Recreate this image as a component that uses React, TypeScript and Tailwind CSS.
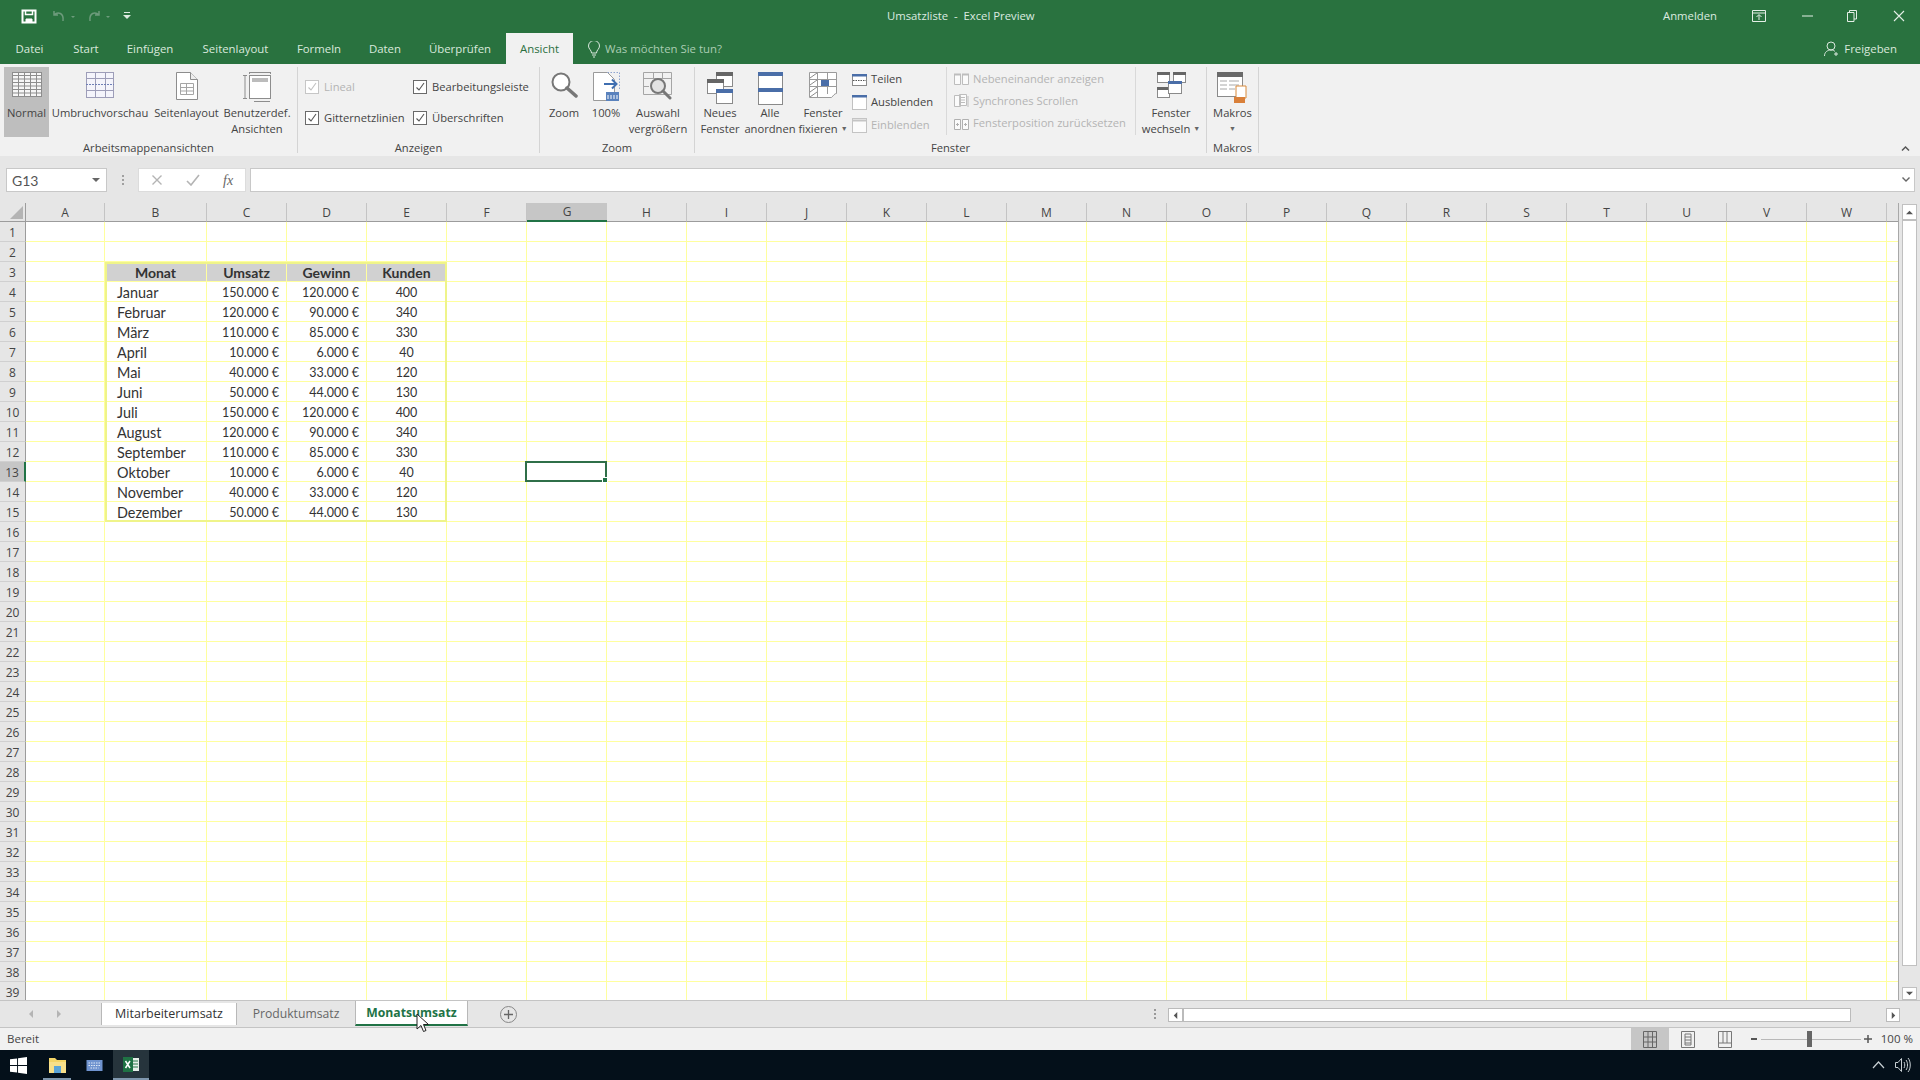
import React from 'react';

const COLUMNS = 'ABCDEFGHIJKLMNOPQRSTUVW'.split('');

const TABLE = [
  ['Januar', '150.000 €', '120.000 €', '400'],
  ['Februar', '120.000 €', '90.000 €', '340'],
  ['März', '110.000 €', '85.000 €', '330'],
  ['April', '10.000 €', '6.000 €', '40'],
  ['Mai', '40.000 €', '33.000 €', '120'],
  ['Juni', '50.000 €', '44.000 €', '130'],
  ['Juli', '150.000 €', '120.000 €', '400'],
  ['August', '120.000 €', '90.000 €', '340'],
  ['September', '110.000 €', '85.000 €', '330'],
  ['Oktober', '10.000 €', '6.000 €', '40'],
  ['November', '40.000 €', '33.000 €', '120'],
  ['Dezember', '50.000 €', '44.000 €', '130'],
];

const TABS: [string, string][] = [
  ['Datei', 'w-[59px]'],
  ['Start', 'w-[54px]'],
  ['Einfügen', 'w-[74px]'],
  ['Seitenlayout', 'w-[97px]'],
  ['Formeln', 'w-[70px]'],
  ['Daten', 'w-[62px]'],
  ['Überprüfen', 'w-[88px]'],
];

/* ---------- small drawings ---------- */

const SaveIcon = () => (
  <svg width="16" height="15" viewBox="0 0 16 15" fill="none" stroke="#fff" strokeWidth="2">
    <path d="M1.5 1.5h13v12h-13z" />
    <path d="M4.5 1.5v4h7v-4" strokeWidth="1.5" />
    <path d="M5 14v-4h6v4" fill="#fff" strokeWidth="1" />
  </svg>
);

const NormalIcon = () => (
  <svg width="30" height="25" viewBox="0 0 30 25" fill="#f6f6f6" stroke="#8d8d8d">
    <rect x="0.5" y="0.5" width="29" height="24" />
    <path
      d="M0 3.500h30M0 7h30M0 10.500h30M0 14h30M0 17.500h30M0 21h30M6.500 0v25M12.500 0v25M18.500 0v25M24.500 0v25"
      fill="none"
    />
  </svg>
);

const BreakIcon = () => (
  <svg width="28" height="26" viewBox="0 0 28 26" fill="#f4f4fb" stroke="#9d9db8">
    <rect x="0.5" y="0.5" width="27" height="25" />
    <path d="M0 6.5h28M0 18.5h28M9.5 0v26M19.5 0v26" fill="none" />
    <path d="M0 12.5h28" fill="none" stroke="#6f7fb5" strokeDasharray="2 1" />
  </svg>
);

const PageIcon = () => (
  <svg width="22" height="28" viewBox="0 0 22 28" fill="#fff" stroke="#8d8d8d">
    <path d="M0.5 0.5h14l7 7v20h-21z" />
    <path d="M14.5 0.5v7h7" fill="#eee" />
    <path d="M4.5 11.5h13v11h-13zM4.5 15.5h13M4.5 19h13M10.5 11.5v11" fill="none" stroke="#a5a5a5" />
  </svg>
);

const CustomIcon = () => (
  <svg width="28" height="30" viewBox="0 0 28 30" fill="none" stroke="#8d8d8d">
    <rect x="6.5" y="3.5" width="21" height="23" fill="#fff" />
    <rect x="9" y="6" width="16" height="4" fill="#bcbcbc" stroke="none" />
    <path d="M2 3.5v23M0 3.5h4M0 26.5h4M6.5 0.5h21M6.5 0v2M27.5 0v2M11 29.5h16" />
  </svg>
);

const LensIcon = () => (
  <svg width="28" height="26" viewBox="0 0 28 26" fill="none">
    <circle cx="11" cy="10" r="8.5" stroke="#777" strokeWidth="2" fill="#fff" />
    <path d="M17 16l9 8" stroke="#777" strokeWidth="3.5" strokeLinecap="round" />
  </svg>
);

const HundredIcon = () => (
  <svg width="27" height="30" viewBox="0 0 27 30" fill="none">
    <path d="M0.5 0.5h14l7 7v21h-21z" fill="#fff" stroke="#9a9a9a" />
    <path d="M14.5 0.5h12v18" stroke="#8ea4cf" strokeDasharray="1.5 1.5" />
    <path d="M11 12h12M19 7.5l4.5 4.5-4.5 4.5" stroke="#3f6eb0" strokeWidth="2" />
    <rect x="13" y="20" width="13" height="9" fill="#5a82bd" />
    <path d="M15 23v4M18 23v4M21 23v4M24 23v4" stroke="#fff" />
  </svg>
);

const SelectionZoomIcon = () => (
  <svg width="30" height="28" viewBox="0 0 30 28" fill="none">
    <path d="M0.5 0.5h28v22h-28zM0.5 6.5h28M10.5 0v6M19.5 0v6M0 14.5h6" stroke="#a5a5a5" />
    <circle cx="15" cy="14" r="7" stroke="#777" strokeWidth="2" fill="#e2e2e2" />
    <path d="M20 19l7 7" stroke="#777" strokeWidth="3" strokeLinecap="round" />
  </svg>
);

const NewWindowIcon = () => (
  <svg width="27" height="32" viewBox="0 0 27 32" fill="#fff" stroke="#8a8a8a">
    <rect x="9.5" y="0.5" width="16" height="14" />
    <rect x="9" y="0" width="17" height="4" fill="#666" stroke="none" />
    <rect x="0.5" y="7.5" width="16" height="14" />
    <rect x="0" y="7" width="17" height="4" fill="#666" stroke="none" />
    <rect x="9.5" y="17.5" width="16" height="14" />
    <rect x="9" y="17" width="17" height="4" fill="#4a6ea8" stroke="none" />
  </svg>
);

const ArrangeIcon = () => (
  <svg width="25" height="33" viewBox="0 0 25 33" fill="#fff" stroke="#8a8a8a">
    <rect x="0.5" y="0.5" width="24" height="32" />
    <rect x="0" y="0" width="25" height="4" fill="#4a6ea8" stroke="none" />
    <rect x="0" y="16" width="25" height="4" fill="#4a6ea8" stroke="none" />
  </svg>
);

const FreezeIcon = () => (
  <svg width="28" height="27" viewBox="0 0 28 27" fill="#fff" stroke="#9a9a9a">
    <path d="M0.5 0.5h27v21c-2 0-3 2-5 4h-22z" />
    <path d="M0 7.5h28M0 14.5h28M8.5 0v26M18.5 0v22" fill="none" />
    <path d="M1 6l7-5M1 13l7-5M1 20l7-5M1 25l7-5" fill="none" stroke="#8a8a8a" />
    <rect x="12" y="8" width="8" height="6" fill="#4a6ea8" stroke="none" />
  </svg>
);

const SwitchIcon = () => (
  <svg width="29" height="26" viewBox="0 0 29 26" fill="#fff" stroke="#8a8a8a">
    <rect x="0.5" y="0.5" width="12" height="10" />
    <rect x="0" y="0" width="13" height="3" fill="#666" stroke="none" />
    <rect x="16.5" y="0.5" width="12" height="10" />
    <rect x="16" y="0" width="13" height="3" fill="#666" stroke="none" />
    <rect x="0.5" y="15.5" width="12" height="10" />
    <rect x="0" y="15" width="13" height="3" fill="#666" stroke="none" />
    <rect x="11.5" y="9.5" width="13" height="12" />
    <rect x="11" y="9" width="14" height="3" fill="#4a6ea8" stroke="none" />
  </svg>
);

const MacroIcon = () => (
  <svg width="32" height="32" viewBox="0 0 32 32" fill="none">
    <rect x="0.5" y="0.5" width="25" height="24" fill="#fff" stroke="#8a8a8a" />
    <rect x="0" y="0" width="26" height="5" fill="#6a6a6a" />
    <path d="M3 9h7M12 9h10M3 13h7M12 13h10M3 17h7M12 17h6" stroke="#a8a8a8" />
    <path d="M19 14h10v12h-10z" fill="#fff" stroke="#d98a3a" />
    <rect x="17" y="25" width="11" height="6" fill="#d9803a" />
  </svg>
);

const SplitIcon = () => (
  <svg width="15" height="12" viewBox="0 0 15 12" fill="#fff" stroke="#8a8a8a">
    <rect x="0.5" y="0.5" width="14" height="11" />
    <rect x="0" y="0" width="15" height="2.5" fill="#4a6ea8" stroke="none" />
    <path d="M1 6.5h13" strokeDasharray="1.5 1" stroke="#555" fill="none" />
  </svg>
);

const HideIcon = () => (
  <svg width="15" height="15" viewBox="0 0 15 15" fill="#fff" stroke="#8a8a8a" strokeDasharray="1 1">
    <rect x="0.5" y="0.5" width="14" height="14" />
    <rect x="0" y="0" width="15" height="2.5" fill="#4a6ea8" stroke="none" />
  </svg>
);

const UnhideIcon = () => (
  <svg width="15" height="15" viewBox="0 0 15 15" fill="#fbfbfb" stroke="#c4c4c4">
    <rect x="0.5" y="0.5" width="14" height="14" />
    <path d="M0 2.5h15" fill="none" strokeWidth="2" />
  </svg>
);

const SideBySideIcon = () => (
  <svg width="15" height="12" viewBox="0 0 15 12" fill="#fbfbfb" stroke="#bdbdbd">
    <path d="M0.5 1.5h6v10h-6zM8.5 1.5h6v10h-6z" />
    <path d="M0 1.5h7M8 1.5h7" strokeWidth="2" fill="none" />
  </svg>
);

const SyncIcon = () => (
  <svg width="15" height="14" viewBox="0 0 15 14" fill="#fbfbfb" stroke="#bdbdbd">
    <path d="M0.5 1.5h6v11h-6zM5.5 0.5h7v11h-7z" />
    <path d="M7 3.5h4M7 6h4M7 8.5h4M14 2v11" fill="none" />
  </svg>
);

const ResetIcon = () => (
  <svg width="15" height="12" viewBox="0 0 15 12" fill="#fbfbfb" stroke="#b0b0b0">
    <path d="M0.5 1.5h6v10h-6zM8.5 1.5h6v10h-6z" />
    <path d="M2 6.5h3M10 6.5h3M3.5 5v3M11.500 5v3" fill="none" />
  </svg>
);

const Check = ({ dim = false }: { dim?: boolean }) => (
  <span
    className={`flex h-[14px] w-[14px] items-center justify-center border bg-white ${dim ? 'border-[#c6c6c6]' : 'border-[#6a6a6a]'}`}
  >
    <svg width="10" height="10" viewBox="0 0 10 10" fill="none" stroke={dim ? '#c0c0c0' : '#555'} strokeWidth="1.1">
      <path d="M1.500 5.500l2.500 2.500 5-7" />
    </svg>
  </span>
);

const Chevron = ({ d, color = '#666', w = 8, h = 8 }: { d: string; color?: string; w?: number; h?: number }) => (
  <svg width={w} height={h} viewBox="0 0 8 8" fill={color}>
    <path d={d} />
  </svg>
);

/* ---------- ribbon parts ---------- */

const BigButton = ({
  width,
  icon,
  lines,
  active,
  arrow,
}: {
  width: string;
  icon: React.ReactNode;
  lines: string[];
  active?: boolean;
  arrow?: boolean;
}) => (
  <div className={`flex h-[70px] shrink-0 flex-col items-center ${width} ${active ? 'bg-[#bebebe]' : ''}`}>
    <div className="flex h-[38px] w-full items-start justify-center pt-[5px]">{icon}</div>
    {lines.map((line, i) => (
      <div key={line} className="flex h-[16px] items-center whitespace-nowrap leading-[16px]">
        {line}
        {arrow && i === lines.length - 1 && <span className="ml-[3px] text-[7px] text-[#666]">▼</span>}
      </div>
    ))}
  </div>
);

const Group = ({ width, label, children }: { width: string; label: string; children: React.ReactNode }) => (
  <div className={`flex h-[86px] shrink-0 flex-col border-r border-[#d4d4d4] ${width}`}>
    <div className="flex h-[70px]">{children}</div>
    <div className="mt-[3px] h-[13px] text-center leading-[16px] text-[#444]">{label}</div>
  </div>
);

const CheckRow = ({ label, dim }: { label: string; dim?: boolean }) => (
  <div className={`flex h-[14px] items-center gap-[5px] whitespace-nowrap ${dim ? 'text-[#b4b4b4]' : ''}`}>
    <Check dim={dim} />
    {label}
  </div>
);

const SmallRow = ({ icon, label, dim }: { icon: React.ReactNode; label: string; dim?: boolean }) => (
  <div className={`flex h-[23px] items-center whitespace-nowrap ${dim ? 'text-[#b4b4b4]' : ''}`}>
    <span className="flex w-[19px] shrink-0 items-center">{icon}</span>
    {label}
  </div>
);

const Ribbon = () => (
  <div className="flex h-[92px] shrink-0 bg-[#f1f1f1] pt-[3px] text-[11.2px] text-[#444]">
    <Group width="w-[298px]" label="Arbeitsmappenansichten">
      <div className="w-[4px]" />
      <BigButton width="w-[45px]" icon={<NormalIcon />} lines={['Normal']} active />
      <BigButton width="w-[102px]" icon={<BreakIcon />} lines={['Umbruchvorschau']} />
      <BigButton width="w-[71px]" icon={<PageIcon />} lines={['Seitenlayout']} />
      <BigButton width="w-[70px]" icon={<CustomIcon />} lines={['Benutzerdef.', 'Ansichten']} />
    </Group>
    <Group width="w-[242px]" label="Anzeigen">
      <div className="grid grid-cols-[108px_auto] gap-y-[17px] pl-[7px] pt-[13px] content-start">
        <CheckRow label="Lineal" dim />
        <CheckRow label="Bearbeitungsleiste" />
        <CheckRow label="Gitternetzlinien" />
        <CheckRow label="Überschriften" />
      </div>
    </Group>
    <Group width="w-[155px]" label="Zoom">
      <BigButton width="w-[48px]" icon={<LensIcon />} lines={['Zoom']} />
      <BigButton width="w-[36px]" icon={<HundredIcon />} lines={['100%']} />
      <BigButton width="w-[68px]" icon={<SelectionZoomIcon />} lines={['Auswahl', 'vergrößern']} />
    </Group>
    <Group width="w-[512px]" label="Fenster">
      <BigButton width="w-[50px]" icon={<NewWindowIcon />} lines={['Neues', 'Fenster']} />
      <BigButton width="w-[50px]" icon={<ArrangeIcon />} lines={['Alle', 'anordnen']} />
      <BigButton width="w-[56px]" icon={<FreezeIcon />} lines={['Fenster', 'fixieren']} arrow />
      <div className="flex w-[95px] shrink-0 flex-col pl-[1px] pt-[1px]">
        <SmallRow icon={<SplitIcon />} label="Teilen" />
        <SmallRow icon={<HideIcon />} label="Ausblenden" />
        <SmallRow icon={<UnhideIcon />} label="Einblenden" dim />
      </div>
      <div className="flex h-[68px] w-[190px] shrink-0 flex-col border-x border-[#d9d9d9] pl-[7px] pt-[1px]">
        <SmallRow icon={<SideBySideIcon />} label="Nebeneinander anzeigen" dim />
        <SmallRow icon={<SyncIcon />} label="Synchrones Scrollen" dim />
        <SmallRow icon={<ResetIcon />} label="Fensterposition zurücksetzen" dim />
      </div>
      <BigButton width="w-[70px]" icon={<SwitchIcon />} lines={['Fenster', 'wechseln']} arrow />
    </Group>
    <Group width="w-[52px]" label="Makros">
      <div className="flex h-[70px] w-[51px] flex-col items-center">
        <div className="h-[38px] pt-[5px]">
          <MacroIcon />
        </div>
        <div className="h-[16px] leading-[16px]">Makros</div>
        <div className="text-[7px] leading-[16px] text-[#666]">▼</div>
      </div>
    </Group>
    <div className="flex flex-1 items-start justify-end pr-[10px] pt-[77px]">
      <Chevron d="M0 6l4-4 4 4-1 1-3-3-3 3z" color="#555" w={9} h={8} />
    </div>
  </div>
);

/* ---------- window chrome ---------- */

const TitleBar = () => (
  <div className="flex h-[32px] shrink-0 items-center text-[11.3px] text-[#dcebe0]">
    <div className="flex w-[887px] items-center pl-[21px]">
      <SaveIcon />
      <svg className="ml-[14px]" width="60" height="12" viewBox="0 0 60 12" fill="none" stroke="#6d9b7c" strokeWidth="1.5">
        <path d="M3 5c4-4 10-2 9 6M3 1v4h4M48 5c-4-4-10-2-9 6M48 1v4h-4" />
        <path d="M20 6h4l-2 2zM55 6h4l-2 2z" fill="#6d9b7c" stroke="none" />
      </svg>
      <svg className="ml-[12px]" width="8" height="8" viewBox="0 0 8 8" fill="#dcebe0">
        <path d="M1 0h6v1h-6zM0 3h8l-4 4z" />
      </svg>
    </div>
    <div className="w-[147px] whitespace-pre text-center">Umsatzliste  -  Excel Preview</div>
    <div className="ml-[627px] w-[58px] text-center">Anmelden</div>
    <svg className="ml-[33px]" width="14" height="12" viewBox="0 0 14 12" fill="none" stroke="#e4efe7">
      <path d="M0.500 0.500h13v11h-13zM0.500 3h13M7 10V5M4.500 7L7 4.500 9.500 7" />
    </svg>
    <svg className="ml-[36px]" width="11" height="2" viewBox="0 0 11 2" fill="#e4efe7">
      <rect width="11" height="1" y="0.500" />
    </svg>
    <svg className="ml-[34px]" width="10" height="12" viewBox="0 0 10 12" fill="none" stroke="#e4efe7">
      <path d="M0.500 2.500h6.500v9h-6.500zM2.500 2.500V0.500h7v8.500H7" />
    </svg>
    <svg className="ml-[36px]" width="12" height="12" viewBox="0 0 12 12" fill="none" stroke="#e4efe7" strokeWidth="1.100">
      <path d="M1 1l10 10M11 1L1 11" />
    </svg>
  </div>
);

const MenuRow = () => (
  <div className="flex h-[32px] shrink-0 text-[11.4px] text-[#d9e9dd]">
    {TABS.map(([name, width]) => (
      <div key={name} className={`flex h-full items-center justify-center pt-[2px] ${width}`}>
        {name}
      </div>
    ))}
    <div className="ml-[2px] flex h-[31px] w-[67px] items-center justify-center self-end bg-[#f1f1f1] pt-[1px] text-[#2a6f3e]">Ansicht</div>
    <div className="ml-[15px] flex items-center pt-[2px] text-[#a9cdb3]">
      <svg width="12" height="17" viewBox="0 0 12 17" fill="none" stroke="#dbe9df" className="mr-[5px]">
        <path d="M3.500 12c0-3-3-4-3-7a5.500 5.500 0 0111 0c0 3-3 4-3 7zM4 14h4M5 16h2" />
      </svg>
      Was möchten Sie tun?
    </div>
    <div className="ml-auto mr-[23px] flex items-center pt-[2px]">
      <svg width="15" height="16" viewBox="0 0 15 16" fill="none" stroke="#dbe9df" className="mr-[5px]">
        <circle cx="7" cy="5" r="4" />
        <path d="M0.500 15c0-4 3-6 6.500-6 2 0 3 .5 4 1.500M12 11v4M10 13h4" />
      </svg>
      Freigeben
    </div>
  </div>
);

const FormulaBar = () => (
  <div className="flex h-[47px] shrink-0 items-start bg-[#e6e6e6] pl-[6px] pt-[12px] text-[12px] text-[#555]">
    <div className="flex h-[24px] w-[101px] items-center justify-between border border-[#c8c8c8] bg-white pl-[5px] pr-[6px] font-['Lato',sans-serif] text-[14px]">
      G13
      <Chevron d="M0 2h8l-4 4z" w={8} h={8} />
    </div>
    <div className="flex h-[24px] w-[31px] flex-col items-center justify-center gap-[2px]">
      <span className="h-[2px] w-[2px] bg-[#a0a0a0]" />
      <span className="h-[2px] w-[2px] bg-[#a0a0a0]" />
      <span className="h-[2px] w-[2px] bg-[#a0a0a0]" />
    </div>
    <div className="flex h-[24px] w-[108px] items-center border border-[#dcdcdc] bg-white pl-[12px]">
      <svg width="12" height="12" viewBox="0 0 12 12" fill="none" stroke="#b4b4b4" strokeWidth="1.400">
        <path d="M1.500 1.500l9 9M10.500 1.500l-9 9" />
      </svg>
      <svg className="ml-[23px]" width="14" height="12" viewBox="0 0 14 12" fill="none" stroke="#b4b4b4" strokeWidth="1.600">
        <path d="M1 7l4 4 8-10" />
      </svg>
      <span className="ml-[23px] font-['Liberation_Serif',serif] text-[14px] italic text-[#666]">fx</span>
    </div>
    <div className="ml-[4px] flex h-[24px] w-[1665px] items-center justify-end border border-[#c8c8c8] bg-white pr-[4px]">
      <Chevron d="M0 2l4 4 4-4-1-1-3 3-3-3z" color="#666" />
    </div>
  </div>
);

/* ---------- sheet ---------- */

const cellText = (row: number, col: number) => {
  if (row === 3) return ['', 'Monat', 'Umsatz', 'Gewinn', 'Kunden'][col] ?? '';
  if (row >= 4 && row <= 15 && col >= 1 && col <= 4) return TABLE[row - 4][col - 1];
  return '';
};

const Cell = ({ row, col }: { row: number; col: number }) => {
  const inTable = row >= 3 && row <= 15 && col >= 1 && col <= 4;
  const align = !inTable
    ? ''
    : row === 3
      ? 'justify-center bg-[#d1d1d1] pt-[2px] text-[14px] font-bold text-[#222]'
      : col === 1
        ? 'justify-start pl-[12px] pt-[3px] text-[14.400px]'
        : col === 4
          ? 'justify-center pt-[4px] text-[12.500px]'
          : 'justify-end pr-[7px] pt-[4px] text-[12.500px]';
  return (
    <div
      className={`flex items-center border-b border-r border-[#ffff9e] text-[#333] ${align}`}
      style={{ gridRow: row + 1, gridColumn: col + 2 }}
    >
      {cellText(row, col)}
    </div>
  );
};

const SheetGrid = () => {
  const rows = Array.from({ length: 39 }, (_, i) => i + 1);
  return (
    <div className="grid h-[797px] w-[1899px] shrink-0 grid-cols-[26px_79px_102px_repeat(21,80px)_12px] grid-rows-[19px_repeat(39,20px)] overflow-hidden border-r border-[#a8a8a8] bg-white font-['Lato',sans-serif]">
      <div className="flex items-end justify-end border-b border-r border-[#9c9c9c] bg-[#e6e6e6] pb-[2px] pr-[2px]" style={{ gridRow: 1, gridColumn: 1 }}>
        <svg width="13" height="13" viewBox="0 0 13 13" fill="#b4b4b4">
          <path d="M13 0v13H0z" />
        </svg>
      </div>
      {COLUMNS.map((c, i) => (
        <div
          key={c}
          className={`flex items-center justify-center border-b pt-[1px] font-['Open_Sans',sans-serif] text-[12px] text-[#444] ${
            c === 'G' ? 'border-b-2 border-b-[#217346] bg-[#c6c6c6]' : 'border-b-[#9c9c9c] border-r border-r-[#c4c4c4] bg-[#e6e6e6]'
          }`}
          style={{ gridRow: 1, gridColumn: i + 2 }}
        >
          {c}
        </div>
      ))}
      <div className="border-b border-[#9c9c9c] bg-[#e6e6e6]" style={{ gridRow: 1, gridColumn: 25 }} />
      {rows.map((r) => (
        <React.Fragment key={r}>
          <div
            className={`flex items-center justify-center border-b border-b-[#d0d0d0] pt-[2px] font-['Open_Sans',sans-serif] text-[12px] text-[#444] ${
              r === 13 ? 'border-r-2 border-r-[#217346] bg-[#c6c6c6]' : 'border-r border-r-[#9c9c9c] bg-[#e6e6e6]'
            }`}
            style={{ gridRow: r + 1, gridColumn: 1 }}
          >
            {r}
          </div>
          {Array.from({ length: 24 }, (_, c) => (
            <Cell key={c} row={r} col={c} />
          ))}
        </React.Fragment>
      ))}
      {/* table outline and active cell sit in the same grid tracks */}
      <div className="pointer-events-none border-2 border-[#eff48a]" style={{ gridRow: '4 / 17', gridColumn: '3 / 7' }} />
      <div className="pointer-events-none relative -ml-[2px] -mt-[1px] border-2 border-[#2f6f48]" style={{ gridRow: 14, gridColumn: 8 }}>
        <span className="absolute -bottom-[3px] -right-[3px] h-[6px] w-[6px] border border-white bg-[#217346]" />
      </div>
    </div>
  );
};

const VerticalScroll = () => (
  <div className="flex h-[797px] w-[21px] shrink-0 flex-col bg-[#e6e6e6] pl-[3px] pt-[1px]">
    <div className="flex h-[16px] w-[15px] items-center justify-center border border-[#c0c0c0] bg-white">
      <Chevron d="M0 6l4-4 4 4z" color="#555" w={7} h={7} />
    </div>
    <div className="h-[746px] w-[15px] border border-[#c0c0c0] bg-white" />
    <div className="mt-[21px] flex h-[13px] w-[15px] items-center justify-center border border-[#c0c0c0] bg-white">
      <Chevron d="M0 2h8l-4 4z" color="#555" w={7} h={7} />
    </div>
  </div>
);

const SheetTabs = () => (
  <div className="flex h-[28px] shrink-0 border-b border-t border-[#c4c4c4] bg-[#e6e6e6] font-['Open_Sans',sans-serif] text-[12.2px]">
    <div className="flex w-[101px] items-center pl-[27px] text-[#bbb]">
      <Chevron d="M6 0v8L2 4z" color="#b4b4b4" />
      <span className="ml-[20px]">
        <Chevron d="M2 0v8l4-4z" color="#b4b4b4" />
      </span>
    </div>
    <div className="mt-[2px] flex h-[22px] w-[136px] items-center justify-center border-l border-r border-[#b8b8b8] bg-white text-[12.5px] text-[#333]">Mitarbeiterumsatz</div>
    <div className="flex w-[118px] items-center justify-center pt-[1px] text-[#666]">Produktumsatz</div>
    <div className="flex h-[25px] w-[113px] items-center justify-center border-x border-b-2 border-x-[#b8b8b8] border-b-[#217346] bg-white pt-[2px] font-bold text-[#217346]">Monatsumsatz</div>
    <div className="ml-[32px] mt-[5px] flex h-[17px] w-[17px] items-center justify-center rounded-full border border-[#888] text-[#666]">
      <svg width="9" height="9" viewBox="0 0 9 9" stroke="#666" strokeWidth="1.300">
        <path d="M4.500 0v9M0 4.500h9" />
      </svg>
    </div>
    <div className="ml-[630px] mr-[5px] flex w-[16px] flex-col items-center justify-center gap-[2px]">
      <span className="h-[2px] w-[2px] bg-[#999]" />
      <span className="h-[2px] w-[2px] bg-[#999]" />
      <span className="h-[2px] w-[2px] bg-[#999]" />
    </div>
    <div className="mt-[7px] flex h-[14px] w-[15px] items-center justify-center border border-[#bbb] bg-white">
      <Chevron d="M6 0v8L2 4z" color="#555" w={7} h={7} />
    </div>
    <div className="mt-[7px] h-[14px] w-[668px] border border-[#bbb] bg-white" />
    <div className="w-[35px]" />
    <div className="mt-[7px] flex h-[14px] w-[14px] items-center justify-center border border-[#bbb] bg-white">
      <Chevron d="M2 0v8l4-4z" color="#555" w={7} h={7} />
    </div>
  </div>
);

const StatusBar = () => (
  <div className="flex h-[22px] shrink-0 items-center bg-[#f1f1f1] text-[11.5px] text-[#444]">
    <span className="pl-[7px]">Bereit</span>
    <div className="ml-auto flex h-full w-[38px] items-center justify-center bg-[#c6c6c6]">
      <svg width="14" height="17" viewBox="0 0 14 17" fill="none" stroke="#666">
        <path d="M0.500 0.500h13v16h-13zM0.500 6h13M0.500 11h13M5 0v17M9.500 0v17" />
      </svg>
    </div>
    <svg className="ml-[12px]" width="14" height="17" viewBox="0 0 14 17" fill="none" stroke="#777">
      <path d="M0.500 0.500h13v16h-13zM4 3h6v11h-6zM4 6h6M4 9h6M4 12h6" />
    </svg>
    <svg className="ml-[23px]" width="14" height="17" viewBox="0 0 14 17" fill="none" stroke="#777">
      <path d="M0.500 0.500h13v16h-13zM0.500 12h13M5 0v12M9 0v12" />
    </svg>
    <span className="ml-[19px] h-[2px] w-[6px] bg-[#555]" />
    <div className="ml-[4px] flex h-[12px] w-[100px] items-center">
      <div className="relative h-px w-full bg-[#b8b8b8]">
        <span className="absolute -top-[8px] left-[46px] h-[16px] w-[5px] bg-[#666]" />
      </div>
    </div>
    <svg className="ml-[3px]" width="8" height="8" viewBox="0 0 8 8" stroke="#555" strokeWidth="1.500">
      <path d="M4 0v8M0 4h8" />
    </svg>
    <span className="ml-[9px] mr-[7px] whitespace-nowrap">100 %</span>
  </div>
);

const Taskbar = () => (
  <div className="flex h-[30px] shrink-0 items-center bg-[#04101a]">
    <svg className="ml-[10px]" width="17" height="17" viewBox="0 0 18 18" fill="#fff">
      <path d="M0 2.500l7.500-1v7H0zM8.500 1.300L18 0v8.500H8.500zM0 9.500h7.500v7l-7.500-1zM8.500 9.500H18V18l-9.500-1.300z" />
    </svg>
    <div className="ml-[16px] flex h-full w-[28px] items-center justify-center border-b-2 border-[#7f97ad]">
      <svg width="17" height="17" viewBox="0 0 17 17">
        <path d="M0 2h6l2 2h9v13H0z" fill="#f4d567" />
        <rect x="0" y="6" width="17" height="11" fill="#f8e08a" />
        <rect x="5" y="10" width="7" height="7" fill="#5ca5d8" />
      </svg>
    </div>
    <div className="ml-[8px] flex h-full w-[31px] items-center justify-center">
      <svg width="17" height="11" viewBox="0 0 16 11">
        <rect width="16" height="11" fill="#6f93cf" />
        <path d="M2 3h12M2 5.500h12M4 8h8" stroke="#dfe8f6" strokeDasharray="1.500 1" />
      </svg>
    </div>
    <div className="ml-[3px] flex h-full w-[36px] items-center justify-center border-b-2 border-[#7f97ad] bg-[#26343c]">
      <svg width="16" height="15" viewBox="0 0 16 15">
        <rect x="7" y="1" width="9" height="13" fill="#e7efe9" />
        <path d="M10 4h5M10 7h5M10 10h5" stroke="#2a7a4a" />
        <rect x="0" y="0" width="10" height="15" fill="#1f7244" />
        <path d="M2.500 4l4.500 7M7 4l-4.500 7" stroke="#fff" strokeWidth="1.500" />
      </svg>
    </div>
    <div className="ml-auto mr-[9px] flex items-center gap-[10px]">
      <svg width="13" height="8" viewBox="0 0 13 8" fill="none" stroke="#c8d0d4" strokeWidth="1.200">
        <path d="M1 7l5.500-6L12 7" />
      </svg>
      <svg width="16" height="16" viewBox="0 0 16 16" fill="none" stroke="#c8d0d4">
        <path d="M0.500 5.500h2.500l3.500-4v13l-3.500-4H0.500zM9 5c1 1.500 1 4.500 0 6M11 3c2 2.500 2 7.500 0 10M13 1c3 3.500 3 10.500 0 14" />
      </svg>
    </div>
  </div>
);

const Cursor = () => (
  <svg className="pointer-events-none absolute left-[416px] top-[1013px]" width="13" height="20" viewBox="0 0 13 20">
    <path d="M1 1v15l4-3.500 2.500 6 2.500-1-2.500-6h5z" fill="#fff" stroke="#222" />
  </svg>
);

export default function App() {
  return (
    <div className="relative flex h-[1080px] w-[1920px] flex-col overflow-hidden bg-[#e6e6e6] font-['Open_Sans',sans-serif]">
      <div className="bg-[#29723f]">
        <TitleBar />
        <MenuRow />
      </div>
      <Ribbon />
      <FormulaBar />
      <div className="flex h-[797px] shrink-0">
        <SheetGrid />
        <VerticalScroll />
      </div>
      <SheetTabs />
      <StatusBar />
      <Taskbar />
      <Cursor />
    </div>
  );
}
